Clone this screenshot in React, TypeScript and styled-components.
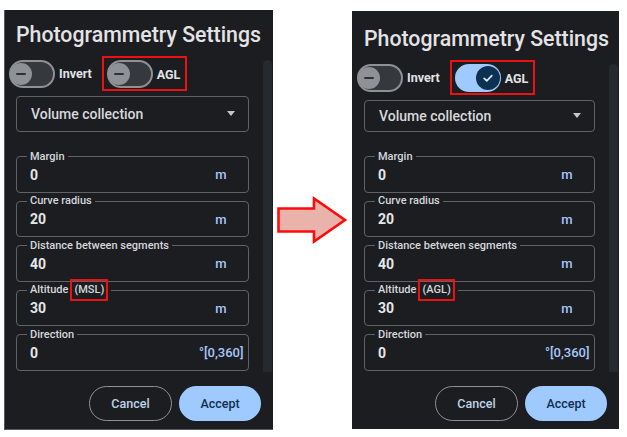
import React from "react";
import styled, { createGlobalStyle } from "styled-components";

const GlobalStyle = createGlobalStyle`
  html, body { margin: 0; padding: 0; background: #ffffff; }
  body { font-family: Roboto, "Noto Sans", sans-serif; }
  * { box-sizing: border-box; }
`;

const RED = "#ec1212";

const Page = styled.div`
  display: flex;
  align-items: flex-start;
  padding: 10px 0 0 4px;
`;

const Panel = styled.section<{ $w: number; $h: number; $top: number; $bottom: number; $offset: number; $edge?: boolean }>`
  width: ${(p) => p.$w}px;
  height: ${(p) => p.$h}px;
  margin-top: ${(p) => p.$offset}px;
  padding: ${(p) => p.$top}px 0 ${(p) => p.$bottom}px 0;
  background: #1b1d21;
  display: flex;
  flex-direction: column;
  flex-shrink: 0;
  box-shadow: ${(p) => (p.$edge ? "inset 1px -1px 0 #55585c" : "none")};
`;

const Title = styled.h2`
  margin: 0 0 9px 0;
  padding: 0 12px;
  font-size: 21.3px;
  font-weight: 500;
  line-height: 24px;
  color: #e3e3e6;
  white-space: nowrap;
`;

const Scroller = styled.div`
  flex: 1;
  min-height: 0;
  display: flex;
  overflow: hidden;
`;

const Body = styled.div`
  flex: 1;
  display: flex;
  flex-direction: column;
  padding-right: 14px;
`;

const ScrollTrack = styled.div`
  width: 9px;
  margin: 4px 1px 0 0;
  background: #26292d;
  border-radius: 5px 5px 0 0;
`;

const ToggleRow = styled.div`
  display: flex;
  align-items: center;
  gap: 10px;
  height: 35px;
  padding-left: 5px;
`;

const ToggleItem = styled.label`
  display: flex;
  align-items: center;
  gap: 4px;
`;

const ToggleHighlight = styled.div`
  display: flex;
  align-items: center;
  border: 2px solid ${RED};
  padding: 2px 5px 1px 3px;
`;

const Track = styled.span<{ $on: boolean }>`
  width: 46px;
  height: 28px;
  border-radius: 14px;
  border: 2px solid ${(p) => (p.$on ? "#9ecaff" : "#8e9196")};
  background: ${(p) => (p.$on ? "#9ecaff" : "#35383c")};
  display: flex;
  align-items: center;
  justify-content: ${(p) => (p.$on ? "flex-end" : "flex-start")};
`;

const Thumb = styled.span<{ $on: boolean }>`
  width: ${(p) => (p.$on ? 24 : 22)}px;
  height: ${(p) => (p.$on ? 24 : 22)}px;
  border-radius: 50%;
  background: ${(p) => (p.$on ? "#0d3251" : "#8e9196")};
  margin: ${(p) => (p.$on ? "0 -1px 0 0" : "0 0 0 -1px")};
  display: flex;
  align-items: center;
  justify-content: center;
`;

const Minus = styled.span`
  width: 10px;
  height: 2px;
  border-radius: 1px;
  background: #2e3135;
`;

const ToggleLabel = styled.span`
  font-size: 12.5px;
  font-weight: 700;
  color: #e3e3e6;
`;

const Select = styled.div`
  margin: 5px 0 18px 12px;
  height: 36px;
  border: 1px solid #5f6267;
  border-radius: 4px;
  display: flex;
  align-items: center;
  justify-content: space-between;
  padding: 0 13px 0 14px;
  font-size: 14px;
  font-weight: 500;
  color: #d8d9dc;
`;

const Caret = styled.span`
  width: 0;
  height: 0;
  border-left: 4px solid transparent;
  border-right: 4px solid transparent;
  border-top: 5px solid #c4c6ca;
`;

const FieldBox = styled.fieldset`
  margin: 0 0 1.5px 12px;
  min-width: 0;
  border: 1px solid #5f6267;
  border-radius: 4px;
  padding: 0 0 6px 10px;
`;

const Legend = styled.legend`
  padding: 0 3px;
  font-size: 11px;
  font-weight: 500;
  line-height: 14px;
  color: #d6d7da;
  white-space: nowrap;
`;

const LabelHighlight = styled.span`
  display: inline-block;
  border: 2px solid ${RED};
  padding: 0 2px;
  line-height: 18px;
  margin: -4px 0 -4px 2px;
`;

const FieldRow = styled.div`
  display: flex;
  align-items: center;
  height: 22px;
`;

const Value = styled.span`
  flex: 1;
  padding-left: 3px;
  font-size: 14px;
  font-weight: 700;
  color: #e6e7ea;
`;

const Unit = styled.span`
  width: 44px;
  margin-right: 5px;
  text-align: center;
  font-size: 13px;
  font-weight: 500;
  color: #a8c7fa;
  white-space: nowrap;
`;

const Footer = styled.div`
  display: flex;
  justify-content: flex-end;
  gap: 7px;
  margin-top: 14px;
  padding-right: 12px;
`;

const Button = styled.button<{ $filled?: boolean }>`
  height: 35px;
  width: ${(p) => (p.$filled ? 82 : 83)}px;
  border-radius: 18px;
  border: ${(p) => (p.$filled ? "none" : "1px solid #8e9196")};
  background: ${(p) => (p.$filled ? "#9ecaff" : "transparent")};
  color: ${(p) => (p.$filled ? "#0f2f4c" : "#c0d2e6")};
  font-family: Roboto, sans-serif;
  font-size: 12.5px;
  font-weight: 500;
  padding: 0;
`;

const ArrowWrap = styled.div`
  width: 79px;
  height: 50px;
  align-self: center;
  flex-shrink: 0;
  display: flex;
`;

function Switch({ on }: { on: boolean }) {
  return (
    <Track $on={on}>
      <Thumb $on={on}>
        {on ? (
          <svg width="14" height="14" viewBox="0 0 14 14">
            <path d="M3.2 7.3l2.6 2.6 5-5.2" fill="none" stroke="#d6e6ff" strokeWidth="1.7" strokeLinecap="round" strokeLinejoin="round" />
          </svg>
        ) : (
          <Minus />
        )}
      </Thumb>
    </Track>
  );
}

function Field({ label, mark, value, unit }: { label: string; mark?: string; value: string; unit: string }) {
  return (
    <FieldBox>
      <Legend>
        {label}
        {mark && <LabelHighlight>{mark}</LabelHighlight>}
      </Legend>
      <FieldRow>
        <Value>{value}</Value>
        <Unit>{unit}</Unit>
      </FieldRow>
    </FieldBox>
  );
}

function Settings({ agl }: { agl: boolean }) {
  return (
    <>
      <Title>Photogrammetry Settings</Title>
      <Scroller>
        <Body>
          <ToggleRow>
            <ToggleItem>
              <Switch on={false} />
              <ToggleLabel>Invert</ToggleLabel>
            </ToggleItem>
            <ToggleHighlight>
              <ToggleItem>
                <Switch on={agl} />
                <ToggleLabel>AGL</ToggleLabel>
              </ToggleItem>
            </ToggleHighlight>
          </ToggleRow>
          <Select>
            <span>Volume collection</span>
            <Caret />
          </Select>
          <Field label="Margin" value="0" unit="m" />
          <Field label="Curve radius" value="20" unit="m" />
          <Field label="Distance between segments" value="40" unit="m" />
          <Field label="Altitude" mark={agl ? "(AGL)" : "(MSL)"} value="30" unit="m" />
          <Field label="Direction" value="0" unit="°[0,360]" />
        </Body>
        <ScrollTrack />
      </Scroller>
      <Footer>
        <Button>Cancel</Button>
        <Button $filled>Accept</Button>
      </Footer>
    </>
  );
}

export default function App() {
  return (
    <>
      <GlobalStyle />
      <Page>
        <Panel $w={269} $h={420} $top={13} $bottom={9} $offset={0} $edge>
          <Settings agl={false} />
        </Panel>
        <ArrowWrap>
          <svg width="79" height="50" viewBox="0 0 79 50">
            <polygon
              points="5.5,13.5 41,13.5 41,3.5 72,25 41,46.5 41,36.5 5.5,36.5"
              fill="#e9b2ab"
              stroke="#ff0a0a"
              strokeWidth="2.6"
              strokeLinejoin="miter"
            />
          </svg>
        </ArrowWrap>
        <Panel $w={267} $h={418} $top={16} $bottom={8} $offset={1}>
          <Settings agl={true} />
        </Panel>
      </Page>
    </>
  );
}
